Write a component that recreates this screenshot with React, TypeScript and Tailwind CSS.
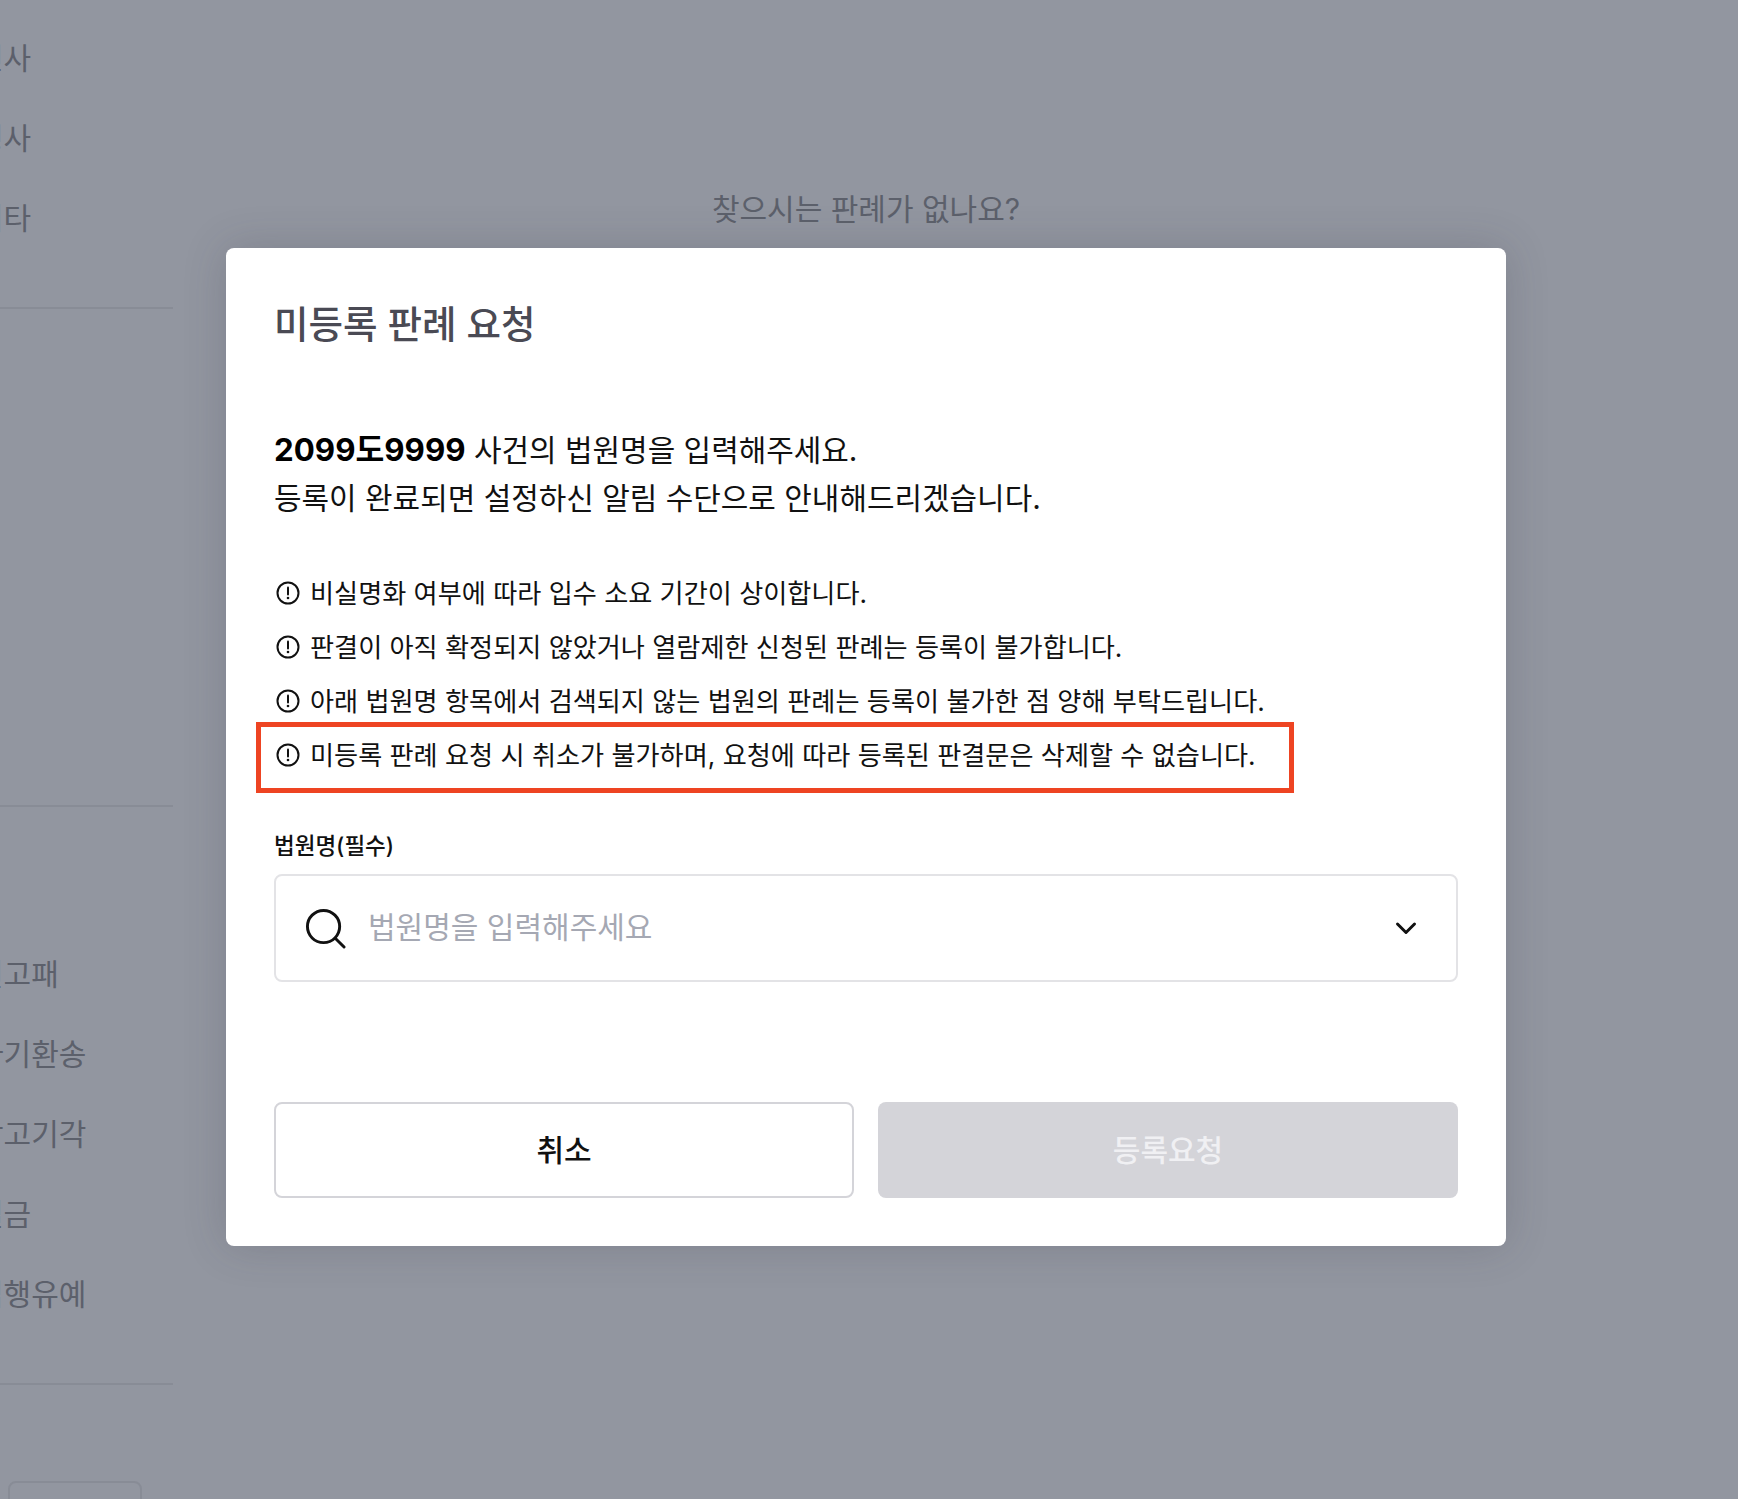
const FONT = "font-['Inter','Noto_Sans_CJK_KR',sans-serif]";

const NOTICES = [
  "비실명화 여부에 따라 입수 소요 기간이 상이합니다.",
  "판결이 아직 확정되지 않았거나 열람제한 신청된 판례는 등록이 불가합니다.",
  "아래 법원명 항목에서 검색되지 않는 법원의 판례는 등록이 불가한 점 양해 부탁드립니다.",
  "미등록 판례 요청 시 취소가 불가하며, 요청에 따라 등록된 판결문은 삭제할 수 없습니다.",
];

function SideItem({ label }: { label: string }) {
  return (
    <div className="flex h-[80px] items-center whitespace-nowrap text-[30px] text-[#5c606b]">
      <span className="-ml-[24px]">{label}</span>
    </div>
  );
}

function NoticeIcon() {
  return (
    <svg width="26" height="26" viewBox="0 0 26 26" fill="none" className="mb-[2px] flex-none">
      <circle cx="13" cy="13" r="10.5" stroke="#111" strokeWidth="2" />
      <path d="M13 7.5v7" stroke="#111" strokeWidth="2" strokeLinecap="round" />
      <circle cx="13" cy="18" r="1.3" fill="#111" />
    </svg>
  );
}

export default function App() {
  return (
    <div className={`relative flex h-[1499px] w-full overflow-hidden bg-[#9296a0] ${FONT}`}>
      {/* dimmed page behind the dialog */}
      <aside className="w-[173px] flex-none overflow-hidden pt-[18px]">
        <SideItem label="민사" />
        <SideItem label="형사" />
        <SideItem label="기타" />
        <div className="mt-[49px] border-t-2 border-[#888c96]" />
        <div className="h-[498px] border-b-2 border-[#888c96]" />
        <div className="pt-[127px]">
          <SideItem label="원고패" />
          <SideItem label="파기환송" />
          <SideItem label="상고기각" />
          <SideItem label="벌금" />
          <SideItem label="집행유예" />
        </div>
        <div className="mt-[49px] border-t-2 border-[#888c96]" />
        <div className="ml-[8px] mt-[96px] h-[40px] w-[134px] rounded-t-lg border-2 border-[#888c96]" />
      </aside>
      <main className="flex-1 pt-[187px] pr-[179px] text-center text-[30px] leading-[44px] text-[#5c606b]">
        찾으시는 판례가 없나요?
      </main>

      <div className="absolute left-[226px] top-[248px] flex h-[998px] w-[1280px] flex-col rounded-lg bg-white px-[48px] shadow-[0_0_44px_rgba(50,52,65,0.2)]">
        <h2 className="mt-[50px] text-[37.5px] font-medium leading-[54px] text-[#4a4a54]">미등록 판례 요청</h2>

        <p className="mt-[74px] text-[29.95px] leading-[48px] text-[#111]">
          <strong className="text-[31.3px] font-bold text-black">2099도9999</strong> 사건의 법원명을 입력해주세요.
          <br />
          등록이 완료되면 설정하신 알림 수단으로 안내해드리겠습니다.
        </p>

        <ul className="relative mt-[45px] flex flex-col">
          {NOTICES.map((n) => (
            <li key={n} className="flex h-[54px] items-center gap-[9px] pl-[1px] text-[26.17px] text-[#111]">
              <NoticeIcon />
              <span>{n}</span>
            </li>
          ))}
          {/* red annotation box */}
          <div className="absolute left-[-18px] top-[155px] h-[71px] w-[1038px] border-[5px] border-[#ee4422]" />
        </ul>

        <label className="mt-[46px] text-[22.5px] font-medium leading-[34px] text-[#111]">법원명(필수)</label>

        <div className="mt-[11px] flex h-[108px] items-center rounded-lg border-2 border-[#e3e3e6] pl-[29px] pr-[38px]">
          <svg width="41" height="41" viewBox="0 0 42 42" fill="none" className="flex-none">
            <circle cx="19" cy="19" r="16.5" stroke="#111" strokeWidth="3" />
            <path d="M31 31l9 9" stroke="#111" strokeWidth="3" strokeLinecap="round" />
          </svg>
          <span className="mb-[1px] ml-[22px] flex-1 text-[30px] text-[#a5a8b3]">법원명을 입력해주세요</span>
          <svg width="24" height="24" viewBox="0 0 24 24" fill="none" className="flex-none">
            <path d="M3.5 8l8.5 8.5L20.5 8" stroke="#111" strokeWidth="3" strokeLinecap="round" strokeLinejoin="round" />
          </svg>
        </div>

        <div className="mt-[120px] flex gap-[24px]">
          <button className="flex h-[96px] w-[580px] flex-none items-center justify-center rounded-lg border-2 border-[#d4d4d9] bg-white text-[30px] font-medium text-[#111]">
            취소
          </button>
          <button className="flex h-[96px] flex-1 items-center justify-center rounded-lg bg-[#d4d4d9] text-[30px] font-medium text-[#f0f0f3]">
            등록요청
          </button>
        </div>
      </div>
    </div>
  );
}
